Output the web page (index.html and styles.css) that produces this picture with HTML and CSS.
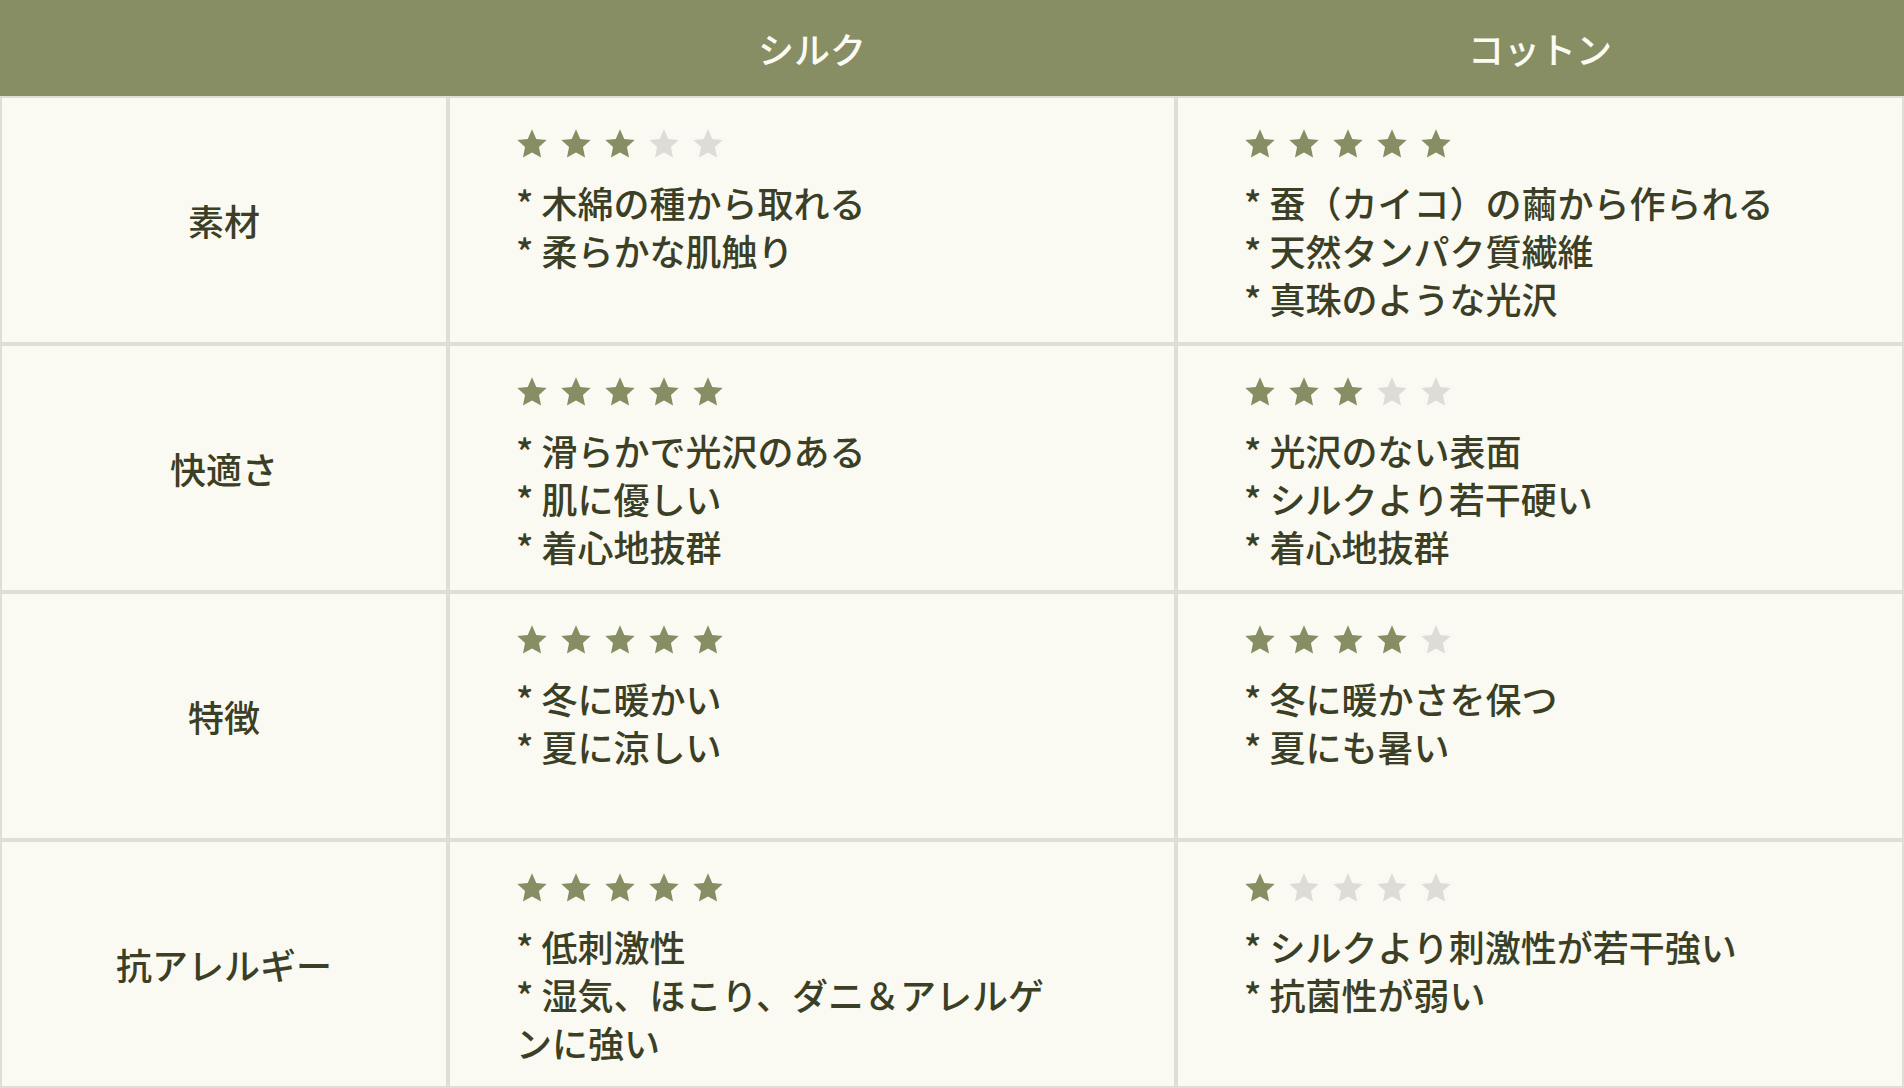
FILE: index.html
```html
<!DOCTYPE html>
<html lang="ja">
<head>
  <meta charset="UTF-8">
  <title>シルクとコットンの比較</title>
  <link rel="stylesheet" href="styles.css">
</head>
<body>

<div class="compare">
  <div class="head-cell"></div>
  <div class="head-cell">シルク</div>
  <div class="head-cell">コットン</div>

  <!-- 素材 -->
  <div class="label">素材</div>
  <div class="cell">
    <div class="stars" data-rate="3"></div>
    <div class="desc">
      <p>* 木綿の種から取れる</p>
      <p>* 柔らかな肌触り</p>
    </div>
  </div>
  <div class="cell">
    <div class="stars" data-rate="5"></div>
    <div class="desc">
      <p>* 蚕（カイコ）の繭から作られる</p>
      <p>* 天然タンパク質繊維</p>
      <p>* 真珠のような光沢</p>
    </div>
  </div>

  <!-- 快適さ -->
  <div class="label">快適さ</div>
  <div class="cell">
    <div class="stars" data-rate="5"></div>
    <div class="desc">
      <p>* 滑らかで光沢のある</p>
      <p>* 肌に優しい</p>
      <p>* 着心地抜群</p>
    </div>
  </div>
  <div class="cell">
    <div class="stars" data-rate="3"></div>
    <div class="desc">
      <p>* 光沢のない表面</p>
      <p>* シルクより若干硬い</p>
      <p>* 着心地抜群</p>
    </div>
  </div>

  <!-- 特徴 -->
  <div class="label">特徴</div>
  <div class="cell">
    <div class="stars" data-rate="5"></div>
    <div class="desc">
      <p>* 冬に暖かい</p>
      <p>* 夏に涼しい</p>
    </div>
  </div>
  <div class="cell">
    <div class="stars" data-rate="4"></div>
    <div class="desc">
      <p>* 冬に暖かさを保つ</p>
      <p>* 夏にも暑い</p>
    </div>
  </div>

  <!-- 抗アレルギー -->
  <div class="label">抗アレルギー</div>
  <div class="cell">
    <div class="stars" data-rate="5"></div>
    <div class="desc">
      <p>* 低刺激性</p>
      <p>* 湿気、ほこり、ダニ＆アレルゲンに強い</p>
    </div>
  </div>
  <div class="cell">
    <div class="stars" data-rate="1"></div>
    <div class="desc">
      <p>* シルクより刺激性が若干強い</p>
      <p>* 抗菌性が弱い</p>
    </div>
  </div>
</div>

<script>
  // build the star rows from data-rate
  var starPath = '12,1 15.2,8.2 23,9 17.2,14.3 18.8,22.2 12,18.3 5.2,22.2 6.8,14.3 1,9 8.8,8.2';
  document.querySelectorAll('.stars').forEach(function(row) {
    var rate = parseInt(row.getAttribute('data-rate'), 10);
    var html = '';
    for (var i = 0; i < 5; i++) {
      var cls = i < rate ? 'star on' : 'star';
      html += '<svg class="' + cls + '" viewBox="0 0 24 24"><polygon points="' + starPath + '"/></svg>';
    }
    row.innerHTML = html;
  });
</script>

</body>
</html>
```

FILE: styles.css
```css
body {
  margin: 0;
  font-family: "Noto Sans CJK JP", "Noto Sans", sans-serif;
  background-color: #fafaf2;
  color: #3b3f25;
}
.compare {
  display: grid;
  grid-template-columns: 448px 1fr 1fr;
  grid-template-rows: 96px repeat(4, 248px);
}
.head-cell {
  background-color: #878e63;
  color: #fbfbf3;
  font-size: 36px;
  font-weight: 500;
  display: flex;
  align-items: center;
  justify-content: center;
}
.label,
.cell {
  box-sizing: border-box;
  border: 2px solid #deddd6;
  background-color: #fafaf2;
}
.label {
  font-size: 36px;
  font-weight: 500;
  display: flex;
  align-items: center;
  justify-content: center;
}
.cell {
  padding: 30px 0 0 65px;
}
.stars {
  display: flex;
  gap: 12px;
  height: 32px;
  padding-left: 1px;
  margin-bottom: 18px;
}
.star {
  width: 32px;
  height: 32px;
  fill: #dddcd7;
}
.star.on {
  fill: #878e63;
}
.desc {
  max-width: 545px;
  padding-left: 1px;
  font-size: 36px;
  font-weight: 500;
  line-height: 48px;
}
.desc p {
  margin: 0;
}
```
